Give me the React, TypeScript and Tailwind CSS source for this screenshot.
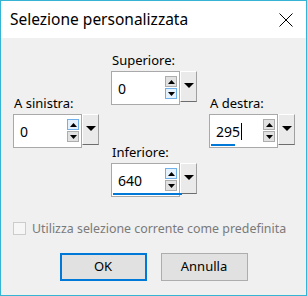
const font = { fontFamily: '"Noto Sans", "Open Sans", sans-serif' }

function Tri({ up, w, h }: { up?: boolean; w: number; h: number }) {
  return (
    <svg width={w} height={h} viewBox={`0 0 ${w} ${h}`} className="block">
      <polygon points={up ? `0,${h} ${w / 2},0 ${w},${h}` : `0,0 ${w},0 ${w / 2},${h}`} fill="#000" />
    </svg>
  )
}

function SpinBtn({ up, hot }: { up?: boolean; hot?: boolean }) {
  return (
    <div
      className={
        "flex h-[11px] w-[12px] items-center justify-center border " +
        (hot ? "border-[#6fb0ea] bg-[#e5f1fb]" : "border-[#adadad] bg-[#e1e1e1]")
      }
    >
      <Tri up={up} w={7} h={4} />
    </div>
  )
}

function Spin({
  value,
  hot,
  line,
  caret,
}: {
  value: string
  hot?: "up" | "down"
  line?: string
  caret?: boolean
}) {
  return (
    <div className="flex h-[34px] w-[86px] items-start">
      <div className="relative flex h-[34px] w-[69px] items-center border border-[#a9a9a9] bg-white pl-[6px] pr-[2px]">
        <div className="flex flex-1 items-center text-[14px] text-black">
          {value}
          {caret && <span className="ml-[1px] inline-block h-[17px] w-[1px] bg-black" />}
        </div>
        <div className="flex flex-col gap-[1px] pb-[1px]">
          <SpinBtn up hot={hot === "up"} />
          <SpinBtn hot={hot === "down"} />
        </div>
        {line && <div className={"absolute bottom-[1px] left-[1px] h-[2px] bg-[#0078d7] " + line} />}
      </div>
      <div className="flex h-[31px] w-[17px] justify-center border-t border-l border-t-white border-l-white border-r border-b border-r-[#a0a0a0] border-b-[#6d6d6d] bg-[#eaeaea] pt-[11px]">
        <Tri w={10} h={5} />
      </div>
    </div>
  )
}

function Field({ label, children }: { label: string; children: React.ReactNode }) {
  return (
    <div className="flex flex-col">
      <div className="h-[15px] whitespace-nowrap pl-[1px] text-[13px] leading-[15px] text-black">{label}</div>
      <div className="mt-[3px]">{children}</div>
    </div>
  )
}

export default function App() {
  return (
    <div style={font} className="flex h-[296px] w-[307px] flex-col border border-[#35b4d4] bg-[#f0f0f0]">
      <div className="flex h-[37px] items-center justify-between bg-white pl-[9px] pr-[13px]">
        <span className="text-[15.5px] text-black">Selezione personalizzata</span>
        <svg width="14" height="14" viewBox="0 0 14 14">
          <path d="M0.5 0.5 L13.5 13.5 M13.5 0.5 L0.5 13.5" stroke="#000" strokeWidth="1" />
        </svg>
      </div>
      <div className="flex flex-col px-[12px] pt-[15px]">
        <div className="flex gap-[12px]">
          <div className="mt-[43px]">
            <Field label="A sinistra:">
              <Spin value="0" hot="up" />
            </Field>
          </div>
          <div className="flex flex-col">
            <Field label="Superiore:">
              <Spin value="0" hot="down" />
            </Field>
            <div className="mt-[40px]">
              <Field label="Inferiore:">
                <Spin value="640" hot="up" line="w-[69px]" />
              </Field>
            </div>
          </div>
          <div className="mt-[43px]">
            <Field label="A destra:">
              <Spin value="295" line="w-[24px]" caret />
            </Field>
          </div>
        </div>
        <div className="mt-[24px] flex items-center">
          <div className="h-[13px] w-[13px] border border-[#cccccc] bg-[#f6f6f6]" />
          <span className="ml-[6px] whitespace-nowrap text-[12.4px] leading-[15px] text-[#7a7a7a]">
            Utilizza selezione corrente come predefinita
          </span>
        </div>
        <div className="mt-[17px] flex justify-center gap-[14px]">
          <button className="h-[28px] w-[87px] border-2 border-[#0078d7] bg-[#e1e1e1] text-[13px] text-black">
            OK
          </button>
          <button className="h-[28px] w-[87px] border border-[#adadad] bg-[#e1e1e1] text-[13px] text-black">
            Annulla
          </button>
        </div>
      </div>
    </div>
  )
}
